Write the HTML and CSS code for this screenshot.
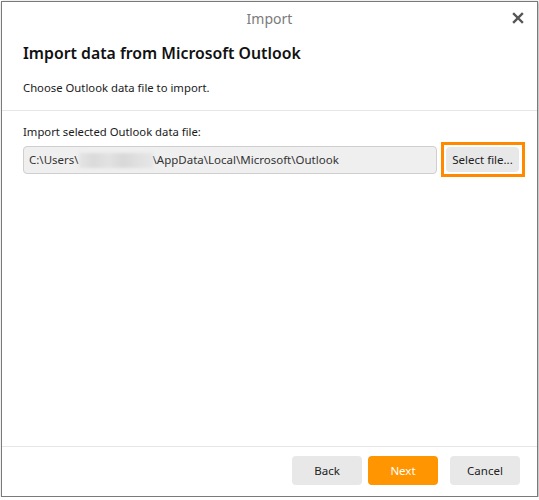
FILE: index.html
```html
<!DOCTYPE html>
<html>
<head>
<meta charset="utf-8">
<link rel="stylesheet" href="styles.css">
</head>
<body>
<div class="window">
  <div class="titlebar">
    <span class="title">Import</span>
    <span class="close">
      <svg width="12" height="12" viewBox="0 0 12 12"><path d="M2 2 L10 10 M10 2 L2 10" stroke="#555" stroke-width="2.4" stroke-linecap="square"/></svg>
    </span>
  </div>
  <div class="content">
    <h1 class="heading">Import data from Microsoft Outlook</h1>
    <p class="intro">Choose Outlook data file to import.</p>
    <div class="sep"></div>
    <div class="label">Import selected Outlook data file:</div>
    <div class="filerow">
      <div class="pathbox">C:\Users\<span class="blur"></span>\AppData\Local\Microsoft\Outlook</div>
      <div class="highlight"><button class="btn select">Select file...</button></div>
    </div>
  </div>
  <div class="spacer"></div>
  <div class="footer">
    <button class="btn">Back</button>
    <button class="btn primary">Next</button>
    <button class="btn cancel">Cancel</button>
  </div>
</div>
</body>
</html>
```
FILE: styles.css
```css
html, body {
  margin: 0;
  padding: 0;
  background: #ffffff;
}
body {
  font-family: "Noto Sans", "Open Sans", sans-serif;
  color: #1a1a1a;
}
.window {
  position: relative;
  margin: 1px 0 0 1px;
  width: 535px;
  height: 494px;
  border: 1px solid #7a7a7a;
  box-shadow: 1px 1px 3px rgba(0,0,0,0.35);
  background: #fff;
  display: flex;
  flex-direction: column;
}
.titlebar {
  height: 34px;
  display: flex;
  align-items: center;
  justify-content: center;
  position: relative;
}
.title {
  font-size: 14px;
  color: #7b7b7b;
  margin-top: -1px;
}
.close {
  position: absolute;
  right: 13px;
  top: 10px;
  width: 12px;
  height: 12px;
  display: flex;
}
.content {
  padding: 0 10px 0 21px;
}
.heading {
  margin: 6px 0 0 0;
  font-size: 15.8px;
  font-weight: 600;
  line-height: 22px;
  color: #111;
}
.intro {
  margin: 16px 0 0 0;
  font-size: 11.3px;
  line-height: 16px;
}
.sep {
  margin: 14px -10px 0 -21px;
  height: 1px;
  background: #e6e6e6;
}
.label {
  margin-top: 13px;
  font-size: 11.3px;
  line-height: 16px;
}
.filerow {
  margin-top: 2px;
  display: flex;
  align-items: center;
}
.pathbox {
  flex: 0 0 auto;
  width: 414px;
  height: 28px;
  box-sizing: border-box;
  margin-top: 1px;
  border: 1px solid #cfcfcf;
  border-radius: 4px;
  background: #efefef;
  font-size: 11.5px;
  line-height: 26px;
  padding-left: 5px;
  color: #333;
  display: flex;
  align-items: center;
}
.blur {
  display: inline-block;
  width: 74px;
  height: 15px;
  background: linear-gradient(90deg, #e4e4e4, #dadada 20%, #e2e2e2 40%, #d8d8d8 60%, #e0e0e0 80%, #e6e6e6);
  filter: blur(1.5px);
}
.highlight {
  flex: 0 0 auto;
  margin-left: 4px;
  border: 3px solid #ff8a00;
  padding: 1px 3px 1px 2px;
  height: 35px;
  box-sizing: border-box;
  display: flex;
  align-items: center;
}
.btn {
  font-family: "Noto Sans", "Open Sans", sans-serif;
  font-size: 11.5px;
  border: none;
  border-radius: 4px;
  background: #e8e8e8;
  color: #222;
  width: 70px;
  height: 29px;
  padding: 0;
}
.btn.select {
  width: 73px;
  height: 25px;
}
.spacer {
  flex: 1;
}
.footer {
  border-top: 1px solid #e6e6e6;
  height: 50px;
  display: flex;
  align-items: flex-start;
  padding: 9px 17px 0 0;
  box-sizing: border-box;
  justify-content: flex-end;
  gap: 6px;
}
.btn.primary {
  background: #ff9500;
  color: #fff;
}
.btn.cancel {
  margin-left: 6px;
}
```
